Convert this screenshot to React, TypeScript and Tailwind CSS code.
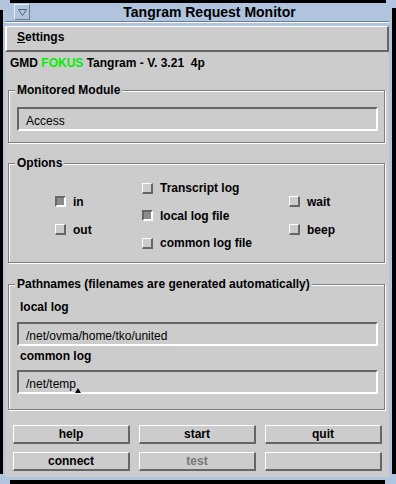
const raised = 'border-t border-l border-white border-b-2 border-r-2 border-b-[#666] border-r-[#666]';
const sunken = 'border-2 border-t-[#666] border-l-[#666] border-b-white border-r-white';

function GroupBox({ title, className, children }: { title: string; className: string; children?: React.ReactNode }) {
  return (
    <div
      className={`relative ml-[3px] w-[377px] border border-[#7f7f7f] shadow-[inset_1px_1px_0_#fff,1px_1px_0_#fff] ${className}`}
    >
      {/* label sits over the etched line, like a legend */}
      <span className="absolute -top-[8px] left-[6px] bg-[#cccccc] px-[2px] text-[12px] font-bold leading-[14px]">
        {title}
      </span>
      {children}
    </div>
  );
}

function Field({ value, caret }: { value: string; caret?: boolean }) {
  return (
    <div className={`h-[24px] ml-[8px] mr-[6px] flex items-center pl-[7px] pt-[4px] text-[12px] ${sunken}`}>
      <span>{value}</span>
      {caret && (
        <svg width="6" height="5" viewBox="0 0 6 5" className="-ml-[1px] mt-[12px]">
          <path d="M3 0 L6 5 L0 5 Z" fill="#000" />
        </svg>
      )}
    </div>
  );
}

function Check({ label, on }: { label: string; on?: boolean }) {
  return (
    <div className="flex items-center gap-[7px] h-[16px]">
      <span
        className={
          on
            ? 'w-[11px] h-[11px] bg-[#8c8c8c] border-2 border-t-[#666] border-l-[#666] border-b-white border-r-white'
            : `w-[11px] h-[11px] bg-[#cccccc] ${raised}`
        }
      />
      <span className="text-[12px] font-bold leading-[14px]">{label}</span>
    </div>
  );
}

function Btn({ label, disabled }: { label?: string; disabled?: boolean }) {
  return (
    <button
      type="button"
      className={`h-[19px] bg-[#cccccc] text-[12px] font-bold leading-[14px] ${raised} ${disabled ? 'text-[#777]' : 'text-black'}`}
    >
      {label}
    </button>
  );
}

export default function App() {
  return (
    <div className="relative w-[396px] h-[484px] bg-black pt-[3px] pl-[3px] font-['Liberation_Sans',Arial,sans-serif] text-black">
      {/* frame corners */}
      <div className="absolute top-0 left-0 w-[10px] h-[3px] bg-[#b0c4de]" />
      <div className="absolute top-0 left-0 w-[3px] h-[10px] bg-[#b0c4de]" />
      <div className="absolute top-0 right-0 w-[10px] h-[3px] bg-[#b0c4de]" />
      <div className="absolute top-0 right-0 w-[4px] h-[8px] bg-[#b0c4de]" />
      <div className="absolute bottom-0 left-0 w-[10px] h-[4px] bg-[#b0c4de]" />
      <div className="absolute bottom-0 left-0 w-[3px] h-[10px] bg-[#b0c4de]" />
      <div className="absolute bottom-0 right-0 w-[11px] h-[4px] bg-[#b0c4de]" />
      <div className="absolute bottom-0 right-0 w-[4px] h-[10px] bg-[#b0c4de]" />

      <div className="flex flex-col w-[389px] h-[477px] bg-[#b0c4de] pl-[2px] pr-[3px] pb-[3px]">
        {/* title bar */}
        <div className="flex items-center h-[18px]">
          <div className="ml-[9px] w-[16px] h-[16px] flex items-center justify-center border border-t-[#e4ecf6] border-l-[#e4ecf6] border-b-[#6a7a90] border-r-[#6a7a90]">
            <svg width="9" height="7" viewBox="0 0 9 7">
              <path d="M0.5 0.5 H8.5 L4.5 6.5 Z" fill="none" stroke="#55657a" strokeWidth="1" />
            </svg>
          </div>
          <div className="flex-1 text-center text-[14px] font-bold leading-[18px]">Tangram Request Monitor</div>
        </div>
        <div className="h-[2px] border-t border-[#6a7a90] border-b border-b-white mb-[3px]" />

        {/* window body */}
        <div className="flex-1 flex flex-col bg-[#cccccc]">
          <div className="h-[26px] flex items-center pl-[10px] pb-[4px] border-t border-l-2 border-white border-b-2 border-r-2 border-b-[#666] border-r-[#666]">
            <span className="text-[12px] font-bold">
              <span className="underline">S</span>ettings
            </span>
          </div>

          <div className="mt-[4px] pl-[5px] h-[14px] text-[12px] font-bold leading-[14px] whitespace-pre">
            GMD <span className="text-[#00ee00]">FOKUS</span> Tangram - V. 3.21  4p
          </div>

          <GroupBox title="Monitored Module" className="mt-[20px] h-[53px] pt-[16px]">
            <Field value="Access" />
          </GroupBox>

          <GroupBox title="Options" className="mt-[20px] h-[100px] pt-[16px]">
            <div className="flex items-center pl-[46px]">
              <div className="w-[87px] flex flex-col gap-[12px]">
                <Check label="in" on />
                <Check label="out" />
              </div>
              <div className="w-[147px] flex flex-col gap-[11.5px]">
                <Check label="Transcript log" />
                <Check label="local log file" on />
                <Check label="common log file" />
              </div>
              <div className="flex flex-col gap-[12px]">
                <Check label="wait" />
                <Check label="beep" />
              </div>
            </div>
          </GroupBox>

          <GroupBox title="Pathnames (filenames are generated automatically)" className="mt-[21px] h-[126px] pt-[15px]">
            <div className="ml-[11px] h-[14px] text-[12px] font-bold leading-[14px]">local log</div>
            <div className="mt-[8px]">
              <Field value="/net/ovma/home/tko/united" />
            </div>
            <div className="ml-[11px] mt-[3px] h-[14px] text-[12px] font-bold leading-[14px]">common log</div>
            <div className="mt-[7px]">
              <Field value="/net/temp" caret />
            </div>
          </GroupBox>

          <div className="mt-[15px] ml-[8px] w-[369px] grid grid-cols-3 gap-x-[9px] gap-y-[8px]">
            <Btn label="help" />
            <Btn label="start" />
            <Btn label="quit" />
            <Btn label="connect" />
            <Btn label="test" disabled />
            <Btn />
          </div>
        </div>
      </div>
    </div>
  );
}
